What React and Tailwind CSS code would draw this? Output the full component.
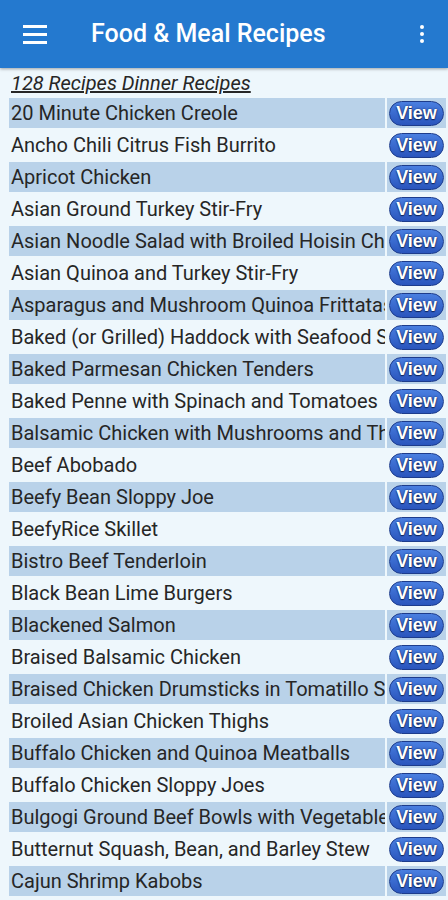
const recipes = [
  "20 Minute Chicken Creole",
  "Ancho Chili Citrus Fish Burrito",
  "Apricot Chicken",
  "Asian Ground Turkey Stir-Fry",
  "Asian Noodle Salad with Broiled Hoisin Chicken",
  "Asian Quinoa and Turkey Stir-Fry",
  "Asparagus and Mushroom Quinoa Frittatas",
  "Baked (or Grilled) Haddock with Seafood Stuffing",
  "Baked Parmesan Chicken Tenders",
  "Baked Penne with Spinach and Tomatoes",
  "Balsamic Chicken with Mushrooms and Thyme",
  "Beef Abobado",
  "Beefy Bean Sloppy Joe",
  "BeefyRice Skillet",
  "Bistro Beef Tenderloin",
  "Black Bean Lime Burgers",
  "Blackened Salmon",
  "Braised Balsamic Chicken",
  "Braised Chicken Drumsticks in Tomatillo Sauce",
  "Broiled Asian Chicken Thighs",
  "Buffalo Chicken and Quinoa Meatballs",
  "Buffalo Chicken Sloppy Joes",
  "Bulgogi Ground Beef Bowls with Vegetables",
  "Butternut Squash, Bean, and Barley Stew",
  "Cajun Shrimp Kabobs",
  "Caprese Chicken",
];

const Row = ({ name, i }) => {
  const striped = i % 2 === 0;
  return (
    <div className="flex gap-[2px] h-[30px] mb-[2px]">
      <div
        className={`flex-1 min-w-0 flex items-center pl-[2px] overflow-hidden whitespace-nowrap text-[20px] text-[#262626] ${
          striped ? "bg-[#b9d2e9]" : ""
        }`}
      >
        {name}
      </div>
      <div
        className={`w-[59px] flex items-center justify-center ${
          striped ? "bg-[#b9d2e9]" : ""
        }`}
      >
        <button
          className="w-[55px] h-[25px] rounded-full border border-[#1d3c8c] bg-gradient-to-b from-[#4a7fe0] to-[#2a55bd] text-white text-[18px] font-bold leading-none font-['Liberation_Sans',sans-serif] [text-shadow:0_0_2px_#10245a,0_1px_1px_#10245a]"
        >
          View
        </button>
      </div>
    </div>
  );
};

export default function App() {
  return (
    <div className="w-[448px] h-[900px] overflow-hidden bg-[#eef7fc] font-['Roboto',sans-serif]">
      <div className="h-[68px] bg-[#2479cf] flex items-center shadow-[0_1px_3px_rgba(0,0,0,0.35)] relative">
        <div className="w-[24px] ml-[23px] flex flex-col gap-[5px]">
          <div className="h-[3px] bg-white" />
          <div className="h-[3px] bg-white" />
          <div className="h-[3px] bg-white" />
        </div>
        <div className="ml-[44px] text-white text-[25px] font-medium">
          Food &amp; Meal Recipes
        </div>
        <div className="ml-auto mr-[24px] flex flex-col gap-[3px]">
          <div className="w-[4px] h-[4px] rounded-full bg-white" />
          <div className="w-[4px] h-[4px] rounded-full bg-white" />
          <div className="w-[4px] h-[4px] rounded-full bg-white" />
        </div>
      </div>
      <div className="h-[30px] flex items-center pl-[11px] italic underline text-[20px] text-[#262626]">
        128 Recipes Dinner Recipes
      </div>
      <div className="pl-[9px] pr-[2px]">
        {recipes.map((r, i) => (
          <Row key={i} name={r} i={i} />
        ))}
      </div>
    </div>
  );
}
